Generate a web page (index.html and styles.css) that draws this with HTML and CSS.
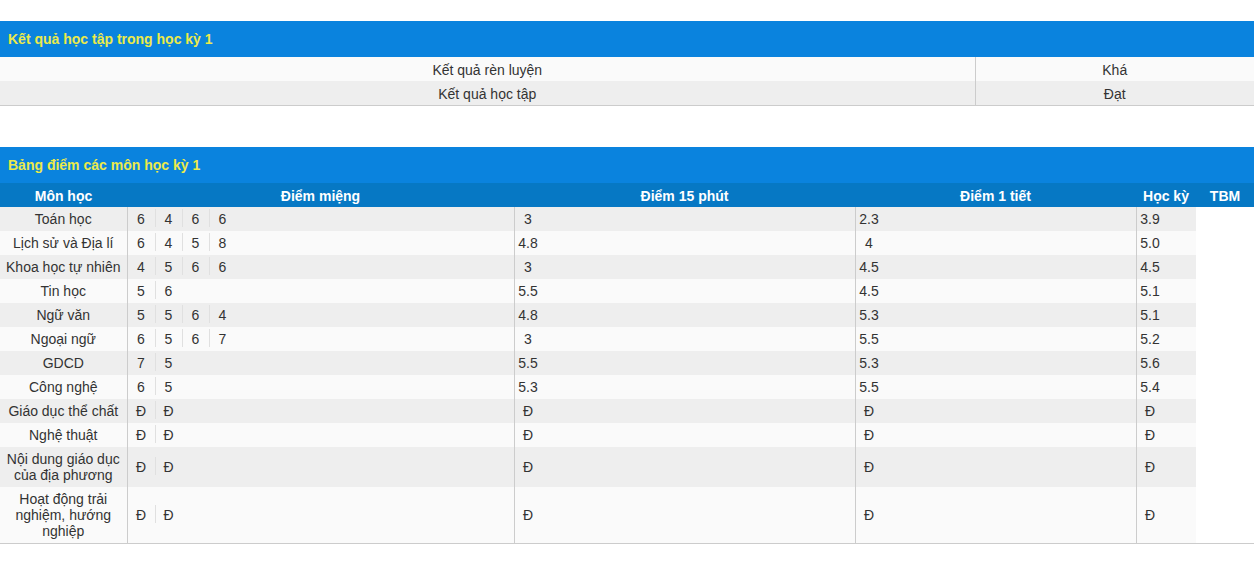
FILE: index.html
```html
<!DOCTYPE html>
<html lang="vi">
<head>
<meta charset="utf-8">
<title>Kết quả học tập</title>
<link rel="stylesheet" href="styles.css">
</head>
<body>
<div class="page">
  <section class="panel">
    <div class="panel-title">Kết quả học tập trong học kỳ 1</div>
    <table class="summary">
      <colgroup><col class="c-label"><col class="c-value"></colgroup>
      <tbody>
        <tr><td>Kết quả rèn luyện</td><td class="val">Khá</td></tr>
        <tr><td>Kết quả học tập</td><td class="val">Đạt</td></tr>
      </tbody>
    </table>
  </section>

  <section class="panel panel-scores">
    <div class="panel-title">Bảng điểm các môn học kỳ 1</div>
    <table class="scores">
      <colgroup>
        <col class="c-sub"><col class="c-mieng"><col class="c-15"><col class="c-1t"><col class="c-hk"><col class="c-tbm">
      </colgroup>
      <thead>
        <tr><th>Môn học</th><th>Điểm miệng</th><th>Điểm 15 phút</th><th>Điểm 1 tiết</th><th>Học kỳ</th><th>TBM</th></tr>
      </thead>
      <tbody>
        <tr><td class="sub">Toán học</td><td class="mk"><div class="marks"><span>6</span><span>4</span><span>6</span><span>6</span></div></td><td class="mk"><div class="marks"><span>3</span></div></td><td class="mk"><div class="marks"><span>2.3</span></div></td><td class="mk"><div class="marks"><span>3.9</span></div></td><td class="tbm"></td></tr>
        <tr><td class="sub">Lịch sử và Địa lí</td><td class="mk"><div class="marks"><span>6</span><span>4</span><span>5</span><span>8</span></div></td><td class="mk"><div class="marks"><span>4.8</span></div></td><td class="mk"><div class="marks"><span>4</span></div></td><td class="mk"><div class="marks"><span>5.0</span></div></td><td class="tbm"></td></tr>
        <tr><td class="sub">Khoa học tự nhiên</td><td class="mk"><div class="marks"><span>4</span><span>5</span><span>6</span><span>6</span></div></td><td class="mk"><div class="marks"><span>3</span></div></td><td class="mk"><div class="marks"><span>4.5</span></div></td><td class="mk"><div class="marks"><span>4.5</span></div></td><td class="tbm"></td></tr>
        <tr><td class="sub">Tin học</td><td class="mk"><div class="marks"><span>5</span><span>6</span></div></td><td class="mk"><div class="marks"><span>5.5</span></div></td><td class="mk"><div class="marks"><span>4.5</span></div></td><td class="mk"><div class="marks"><span>5.1</span></div></td><td class="tbm"></td></tr>
        <tr><td class="sub">Ngữ văn</td><td class="mk"><div class="marks"><span>5</span><span>5</span><span>6</span><span>4</span></div></td><td class="mk"><div class="marks"><span>4.8</span></div></td><td class="mk"><div class="marks"><span>5.3</span></div></td><td class="mk"><div class="marks"><span>5.1</span></div></td><td class="tbm"></td></tr>
        <tr><td class="sub">Ngoại ngữ</td><td class="mk"><div class="marks"><span>6</span><span>5</span><span>6</span><span>7</span></div></td><td class="mk"><div class="marks"><span>3</span></div></td><td class="mk"><div class="marks"><span>5.5</span></div></td><td class="mk"><div class="marks"><span>5.2</span></div></td><td class="tbm"></td></tr>
        <tr><td class="sub">GDCD</td><td class="mk"><div class="marks"><span>7</span><span>5</span></div></td><td class="mk"><div class="marks"><span>5.5</span></div></td><td class="mk"><div class="marks"><span>5.3</span></div></td><td class="mk"><div class="marks"><span>5.6</span></div></td><td class="tbm"></td></tr>
        <tr><td class="sub">Công nghệ</td><td class="mk"><div class="marks"><span>6</span><span>5</span></div></td><td class="mk"><div class="marks"><span>5.3</span></div></td><td class="mk"><div class="marks"><span>5.5</span></div></td><td class="mk"><div class="marks"><span>5.4</span></div></td><td class="tbm"></td></tr>
        <tr><td class="sub">Giáo dục thể chất</td><td class="mk"><div class="marks"><span>Đ</span><span>Đ</span></div></td><td class="mk"><div class="marks"><span>Đ</span></div></td><td class="mk"><div class="marks"><span>Đ</span></div></td><td class="mk"><div class="marks"><span>Đ</span></div></td><td class="tbm"></td></tr>
        <tr><td class="sub">Nghệ thuật</td><td class="mk"><div class="marks"><span>Đ</span><span>Đ</span></div></td><td class="mk"><div class="marks"><span>Đ</span></div></td><td class="mk"><div class="marks"><span>Đ</span></div></td><td class="mk"><div class="marks"><span>Đ</span></div></td><td class="tbm"></td></tr>
        <tr><td class="sub">Nội dung giáo dục của địa phương</td><td class="mk"><div class="marks"><span>Đ</span><span>Đ</span></div></td><td class="mk"><div class="marks"><span>Đ</span></div></td><td class="mk"><div class="marks"><span>Đ</span></div></td><td class="mk"><div class="marks"><span>Đ</span></div></td><td class="tbm"></td></tr>
        <tr><td class="sub">Hoạt động trải nghiệm, hướng nghiệp</td><td class="mk"><div class="marks"><span>Đ</span><span>Đ</span></div></td><td class="mk"><div class="marks"><span>Đ</span></div></td><td class="mk"><div class="marks"><span>Đ</span></div></td><td class="mk"><div class="marks"><span>Đ</span></div></td><td class="tbm"></td></tr>
      </tbody>
    </table>
  </section>
</div>
</body>
</html>
```

FILE: styles.css
```css
html, body {
  margin: 0;
  padding: 0;
  background: #fff;
}

body {
  font-family: "Liberation Sans", Arial, sans-serif;
  font-size: 14px;
  color: #333;
}

.page {
  padding-top: 21px;
}

.panel-scores {
  margin-top: 41px;
}

.panel-title {
  background: #0a83de;
  color: #ecea4a;
  font-weight: bold;
  font-size: 14px;
  line-height: 36px;
  height: 36px;
  padding-left: 8px;
}

table {
  width: 100%;
  border-collapse: collapse;
  table-layout: fixed;
  border-bottom: 1px solid #ccc;
}

td, th {
  padding: 5px 0 3px;
  line-height: 16px;
  font-size: 14px;
}

/* summary table */
.summary .c-value { width: 279px; }
.summary td {
  text-align: center;
}
.summary tr:nth-child(odd) td { background: #fafafa; }
.summary tr:nth-child(even) td { background: #eeeeee; }
.summary td.val { border-left: 1px solid #ccc; }

/* scores table */
.scores .c-sub { width: 127px; }
.scores .c-mieng { width: 387px; }
.scores .c-15 { width: 341px; }
.scores .c-1t { width: 281px; }
.scores .c-hk { width: 60px; }

.scores th {
  background: #0678c4;
  color: #fff;
  font-weight: bold;
  text-align: center;
}

.scores td.sub {
  text-align: center;
  padding: 4px 3px;
}

.scores td.mk {
  border-left: 1px solid #ccc;
  padding: 4px 0;
}

.scores tbody tr:nth-child(odd) td { background: #eeeeee; }
.scores tbody tr:nth-child(even) td { background: #fafafa; }
.scores tbody tr td.tbm { background: #fff; }

.marks {
  display: flex;
}

.marks span {
  box-sizing: border-box;
  width: 27px;
  flex: none;
  text-align: center;
  padding-top: 2px;
  margin-top: -2px;
  height: 18px;
}

.marks span + span {
  border-left: 1px solid #e0e0e0;
}
```
